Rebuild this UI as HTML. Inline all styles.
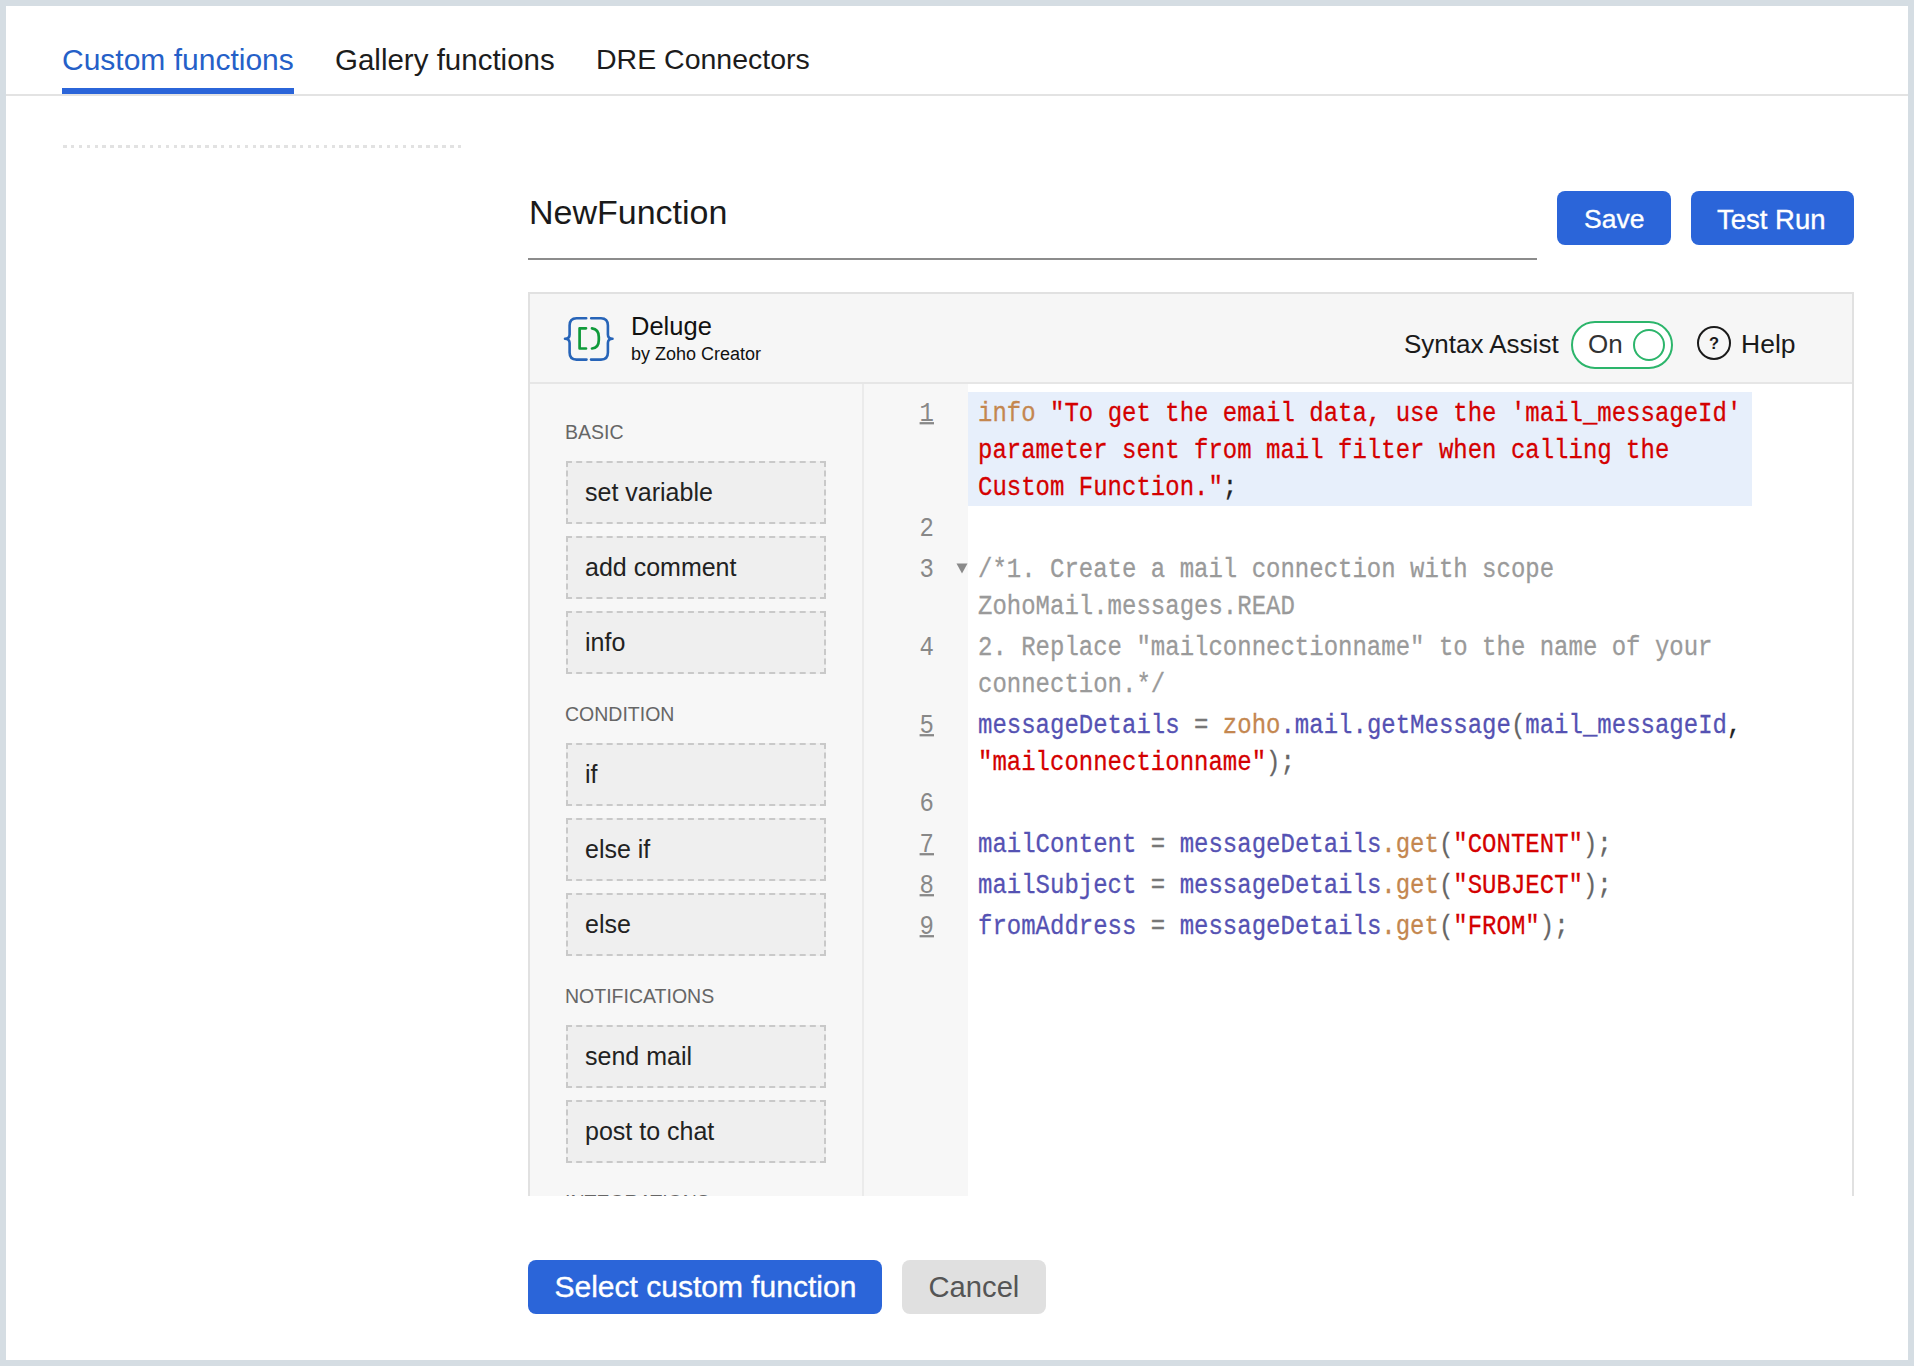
<!DOCTYPE html>
<html><head><meta charset="utf-8">
<style>
*{margin:0;padding:0;box-sizing:border-box}
html,body{width:1914px;height:1366px;overflow:hidden;background:#d5dde3;font-family:"Liberation Sans",sans-serif}
.abs{position:absolute}
.t{position:absolute;white-space:nowrap;line-height:1}
#panel{position:absolute;left:6px;top:6px;width:1902px;height:1354px;background:#fff}
.tab{font-size:29.5px;color:#1c1c1c}
.btn{position:absolute;background:#2b65d9;border-radius:8px;color:#fff;-webkit-text-stroke:0.35px #fff}
.lbl{font-size:19.5px;color:#666}
.blk{position:absolute;left:566px;width:260px;height:63px;background:#efefef;border:2px dashed #c9c9c9}
.blk span{position:absolute;left:17px;top:0;line-height:1;font-size:25px;color:#222;white-space:nowrap}
.code{font-family:"Liberation Mono",monospace;font-size:24px}
.ln{position:absolute;left:864px;width:70px;text-align:right;font-family:"Liberation Mono",monospace;font-size:24px;color:#888;line-height:1;transform:scaleY(1.14);transform-origin:0 18.4px}
.ln.u{text-decoration:underline;text-underline-offset:1px;text-decoration-thickness:2px}
.row{position:absolute;left:978px;font-family:"Liberation Mono",monospace;font-size:24px;line-height:1;white-space:pre;transform:scaleY(1.14);transform-origin:0 18.4px;-webkit-text-stroke:0.25px currentColor}
.kw{color:#c4874f}.st{color:#d40000}.cm{color:#9a9a9a}.id{color:#5552b3}.op{color:#777}.pn{color:#666}.bk{color:#222}
</style></head><body>
<div id="panel"></div>

<!-- tabs -->
<div class="t tab" style="left:62px;top:45px;color:#2560c8;font-size:30px">Custom functions</div>
<div class="t tab" style="left:335px;top:45px">Gallery functions</div>
<div class="t tab" style="left:596px;top:45px;font-size:28.5px">DRE Connectors</div>
<div class="abs" style="left:6px;top:94px;width:1902px;height:2px;background:#e3e3e3"></div>
<div class="abs" style="left:62px;top:88px;width:232px;height:6px;background:#2b65d9"></div>

<!-- dotted placeholder -->
<div class="abs" style="left:62.5px;top:144.5px;width:401px;height:3.5px;background:repeating-linear-gradient(90deg,#e2e2e2 0 3.5px,transparent 3.5px 7.9px)"></div>

<!-- name -->
<div class="t" style="left:529px;top:195px;font-size:34px;color:#1a1a1a">NewFunction</div>
<div class="abs" style="left:528px;top:258px;width:1009px;height:2px;background:#8c8c8c"></div>

<div class="btn" style="left:1557px;top:191px;width:114px;height:54px"><span class="t" style="left:27px;top:15px;font-size:26.5px">Save</span></div>
<div class="btn" style="left:1691px;top:191px;width:163px;height:54px"><span class="t" style="left:26px;top:15px;font-size:27.5px">Test Run</span></div>

<!-- editor -->
<div class="abs" style="left:0;top:0;width:1914px;height:1196px;overflow:hidden">
<div class="abs" style="left:528px;top:292px;width:1326px;height:1000px;border:2px solid #e1e1e1;background:#fff"></div>
<div class="abs" style="left:530px;top:294px;width:1322px;height:88px;background:#f6f6f6"></div>
<div class="abs" style="left:530px;top:382px;width:1322px;height:2px;background:#e6e6e6"></div>
<div class="abs" style="left:530px;top:384px;width:332px;height:900px;background:#f7f7f7"></div>
<div class="abs" style="left:862px;top:384px;width:2px;height:900px;background:#ebebeb"></div>
<div class="abs" style="left:864px;top:384px;width:104px;height:900px;background:#f7f7f7"></div>
<svg class="abs" style="left:555px;top:305px" width="70" height="70" viewBox="0 0 70 70">
<g fill="none" stroke="#2764b8" stroke-width="2.6" stroke-linecap="round" stroke-linejoin="round">
<path d="M31.2 13.2 H21.5 Q14.6 13.2 14.6 20.5 V29.5 Q14.6 33.7 10 33.7 Q14.6 33.7 14.6 38 V47.5 Q14.6 54.6 21.5 54.6 H31.5"/>
<path d="M36.2 13.2 H46 Q52.9 13.2 52.9 20.5 V29.5 Q52.9 33.7 57.5 33.7 Q52.9 33.7 52.9 38 V47.5 Q52.9 54.6 46 54.6 H36"/>
</g>
<g fill="none" stroke="#0f9a3a" stroke-width="2.7" stroke-linecap="round" stroke-linejoin="round">
<path d="M31 23.3 H24.6 V43.5 H31"/>
<path d="M37 23.3 Q43.8 24 43.8 32 V35 Q43.8 43 37 43.5"/>
</g></svg>
<div class="t" style="left:631px;top:314.4px;font-size:25.5px;color:#111;">Deluge</div>
<div class="t" style="left:631px;top:344.8px;font-size:18px;color:#111;">by Zoho Creator</div>
<div class="t" style="left:1404px;top:331.0px;font-size:26px;color:#1a1a1a;">Syntax Assist</div>
<div class="abs" style="left:1571px;top:321px;width:102px;height:48px;border:2px solid #2cb56b;border-radius:24px;background:#fff"></div>
<div class="abs" style="left:1633px;top:329px;width:32px;height:32px;border:2px solid #2cb56b;border-radius:50%"></div>
<div class="t" style="left:1588px;top:331.0px;font-size:26px;color:#333;">On</div>
<div class="abs" style="left:1697px;top:326px;width:34px;height:34px;border:2px solid #1a1a1a;border-radius:50%"></div>
<div class="t" style="left:1697px;top:335px;width:34px;text-align:center;font-size:16.5px;font-weight:bold;color:#1a1a1a">?</div>
<div class="t" style="left:1741px;top:330.6px;font-size:26.5px;color:#1a1a1a;">Help</div>
<div class="t" style="left:565px;top:422.7px;font-size:19.5px;color:#666;">BASIC</div>
<div class="t" style="left:565px;top:704.5px;font-size:19.5px;color:#666;">CONDITION</div>
<div class="t" style="left:565px;top:986.5px;font-size:19.5px;color:#666;">NOTIFICATIONS</div>
<div class="t" style="left:565px;top:1192.5px;font-size:19.5px;color:#666;">INTEGRATIONS</div>
<div class="blk" style="top:461px"><span style="top:16.5px">set variable</span></div>
<div class="blk" style="top:536px"><span style="top:16.5px">add comment</span></div>
<div class="blk" style="top:611px"><span style="top:16.5px">info</span></div>
<div class="blk" style="top:743px"><span style="top:16.5px">if</span></div>
<div class="blk" style="top:818px"><span style="top:16.5px">else if</span></div>
<div class="blk" style="top:893px"><span style="top:16.5px">else</span></div>
<div class="blk" style="top:1025px"><span style="top:16.5px">send mail</span></div>
<div class="blk" style="top:1100px"><span style="top:16.5px">post to chat</span></div>
<div class="abs" style="left:968px;top:392px;width:784px;height:114px;background:#e7effb"></div>
<svg class="abs" style="left:956px;top:563px" width="12" height="11" viewBox="0 0 12 11"><path d="M0.5 0.5 H11.5 L6 10.5 Z" fill="#8a8a8a"/></svg>
<div class="ln u" style="top:402.6px">1</div>
<div class="ln" style="top:517.6px">2</div>
<div class="ln" style="top:558.6px">3</div>
<div class="ln" style="top:636.6px">4</div>
<div class="ln u" style="top:714.6px">5</div>
<div class="ln" style="top:792.6px">6</div>
<div class="ln u" style="top:833.6px">7</div>
<div class="ln u" style="top:874.6px">8</div>
<div class="ln u" style="top:915.6px">9</div>
<div class="row" style="top:402.6px"><span class="kw">info</span> <span class="st">"To get the email data, use the 'mail_messageId'</span></div>
<div class="row" style="top:439.6px"><span class="st">parameter sent from mail filter when calling the</span></div>
<div class="row" style="top:476.6px"><span class="st">Custom Function."</span><span class="bk">;</span></div>
<div class="row" style="top:558.6px"><span class="cm">/*1. Create a mail connection with scope</span></div>
<div class="row" style="top:595.6px"><span class="cm">ZohoMail.messages.READ</span></div>
<div class="row" style="top:636.6px"><span class="cm">2. Replace "mailconnectionname" to the name of your</span></div>
<div class="row" style="top:673.6px"><span class="cm">connection.*/</span></div>
<div class="row" style="top:714.6px"><span class="id">messageDetails</span> <span class="op">=</span> <span class="kw">zoho</span><span class="id">.mail.getMessage</span><span class="pn">(</span><span class="id">mail_messageId</span><span class="bk">,</span></div>
<div class="row" style="top:751.6px"><span class="st">"mailconnectionname"</span><span class="pn">);</span></div>
<div class="row" style="top:833.6px"><span class="id">mailContent</span> <span class="op">=</span> <span class="id">messageDetails</span><span class="kw">.get</span><span class="pn">(</span><span class="st">"CONTENT"</span><span class="pn">);</span></div>
<div class="row" style="top:874.6px"><span class="id">mailSubject</span> <span class="op">=</span> <span class="id">messageDetails</span><span class="kw">.get</span><span class="pn">(</span><span class="st">"SUBJECT"</span><span class="pn">);</span></div>
<div class="row" style="top:915.6px"><span class="id">fromAddress</span> <span class="op">=</span> <span class="id">messageDetails</span><span class="kw">.get</span><span class="pn">(</span><span class="st">"FROM"</span><span class="pn">);</span></div>
</div>
<div class="btn" style="left:528px;top:1260px;width:354px;height:54px"><span class="t" style="left:26.5px;top:12.1px;font-size:30px">Select custom function</span></div>
<div class="abs" style="left:902px;top:1260px;width:144px;height:54px;background:#e0e0e0;border-radius:8px"><span class="t" style="left:26.5px;top:12.8px;font-size:29.2px;color:#555">Cancel</span></div>
</body></html>
